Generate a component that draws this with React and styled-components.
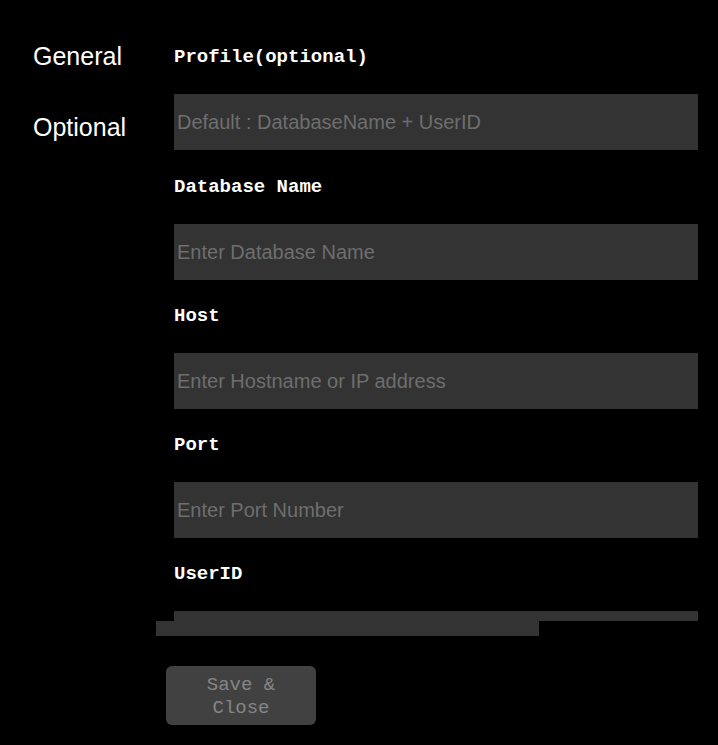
import React from 'react';
import styled, { createGlobalStyle } from 'styled-components';

const GlobalStyle = createGlobalStyle`
  html, body {
    margin: 0;
    padding: 0;
    background: #000000;
  }
  body {
    font-family: "Liberation Sans", Arial, sans-serif;
  }
`;

const Page = styled.div`
  display: flex;
  width: 718px;
  height: 745px;
  background: #000000;
  overflow: hidden;
`;

const Sidebar = styled.nav`
  width: 123px;
  padding: 42px 0 0 33px;
  display: flex;
  flex-direction: column;
  gap: 42px;
  flex-shrink: 0;
`;

const SideItem = styled.div`
  color: #ffffff;
  font-family: "Liberation Sans", Arial, sans-serif;
  font-size: 25px;
  line-height: 29px;
`;

const Main = styled.div`
  flex: 1;
  display: flex;
  flex-direction: column;
`;

const Scroller = styled.div`
  height: 576px;
  overflow: hidden;
  padding: 45px 20px 0 18px;
`;

const Field = styled.div`
  display: flex;
  flex-direction: column;
  margin-bottom: 24px;

  &:first-child {
    margin-bottom: 25px;
  }
`;

const Label = styled.label`
  color: #ffffff;
  font-family: "Liberation Mono", "Courier New", monospace;
  font-weight: bold;
  font-size: 19px;
  line-height: 22px;
  margin: 1px 0 26px;
`;

const Input = styled.input`
  box-sizing: border-box;
  width: 524px;
  height: 56px;
  border: none;
  outline: none;
  background: #333333;
  color: #dddddd;
  padding: 0 3px;
  font-family: "Liberation Sans", Arial, sans-serif;
  font-size: 20px;

  &::placeholder {
    color: #6e6e6e;
  }
`;

const ScrollTrack = styled.div`
  height: 15px;
  width: 100%;
`;

const ScrollThumb = styled.div`
  height: 15px;
  width: 383px;
  background: #333333;
`;

const Footer = styled.div`
  padding: 30px 0 0 10px;
`;

const SaveButton = styled.button`
  box-sizing: border-box;
  width: 150px;
  height: 59px;
  padding: 7px 20px 5px;
  border: none;
  border-radius: 6px;
  background: #414141;
  color: #858585;
  font-family: "Liberation Mono", "Courier New", monospace;
  font-size: 19px;
  line-height: 23px;
  text-align: center;
`;

const fields = [
  { label: 'Profile(optional)', placeholder: 'Default : DatabaseName + UserID' },
  { label: 'Database Name', placeholder: 'Enter Database Name' },
  { label: 'Host', placeholder: 'Enter Hostname or IP address' },
  { label: 'Port', placeholder: 'Enter Port Number' },
  { label: 'UserID', placeholder: 'Enter UserID' },
  { label: 'Password', placeholder: 'Enter Password' },
];

const App = () => {
  return (
    <>
      <GlobalStyle />
      <Page>
        <Sidebar>
          <SideItem>General</SideItem>
          <SideItem>Optional</SideItem>
        </Sidebar>
        <Main>
          <Scroller>
            {fields.map((f) => (
              <Field key={f.label}>
                <Label>{f.label}</Label>
                <Input placeholder={f.placeholder} />
              </Field>
            ))}
          </Scroller>
          <ScrollTrack>
            <ScrollThumb />
          </ScrollTrack>
          <Footer>
            <SaveButton>Save & Close</SaveButton>
          </Footer>
        </Main>
      </Page>
    </>
  );
};

export default App;
